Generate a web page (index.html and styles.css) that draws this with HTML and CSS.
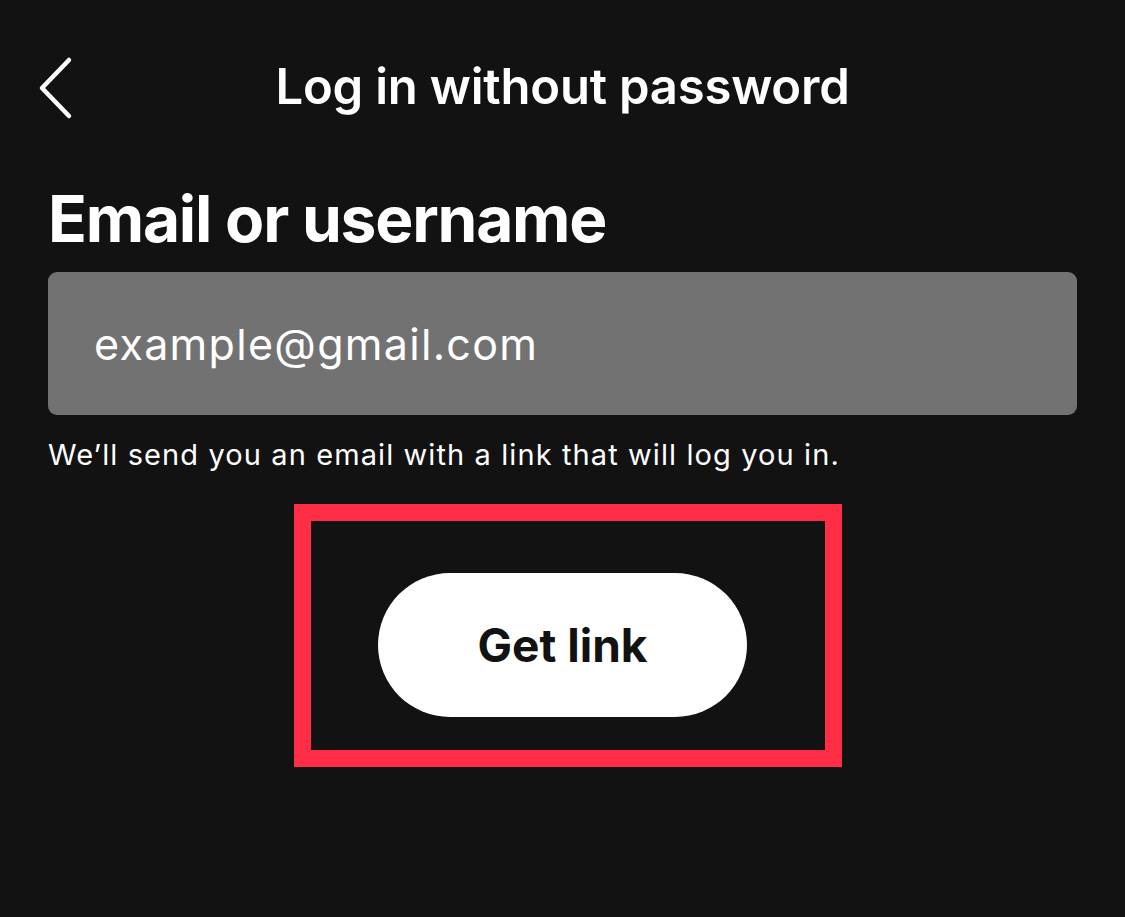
FILE: index.html
```html
<!DOCTYPE html>
<html lang="en">
<head>
<meta charset="UTF-8">
<meta name="viewport" content="width=device-width, initial-scale=1.0">
<title>Log in without password</title>
<link rel="stylesheet" href="styles.css">
</head>
<body>
<div class="screen">
    <div class="top-bar">
        <a class="back" href="#" aria-label="Back">
            <svg width="40" height="64" viewBox="0 0 40 64">
                <polyline points="31,4 4,32 31,60" fill="none" stroke="#ffffff" stroke-width="4.5" stroke-linecap="round" stroke-linejoin="round"/>
            </svg>
        </a>
        <h1>Log in without password</h1>
    </div>
    <h2 class="label">Email or username</h2>
    <div class="field">example@gmail.com</div>
    <p class="hint">We’ll send you an email with a link that will log you in.</p>
    <div class="highlight">
        <button class="get-link">Get link</button>
    </div>
</div>
</body>
</html>
```

FILE: styles.css
```css
body {
    margin: 0;
    background-color: #121212;
    font-family: Inter, "Noto Sans", sans-serif;
    color: #ffffff;
}
.screen {
    padding: 0 48px;
}
.top-bar {
    position: relative;
    height: 174px;
    display: flex;
    justify-content: center;
    align-items: flex-start;
}
.back {
    position: absolute;
    left: -10px;
    top: 56px;
}
.top-bar h1 {
    margin: 57px 0 0;
    font-size: 49px;
    font-weight: 600;
    letter-spacing: -0.2px;
    line-height: 60px;
}
.label {
    margin: 0 0 8px;
    font-size: 64px;
    font-weight: 700;
    letter-spacing: -1.2px;
    line-height: 90px;
}
.field {
    height: 143px;
    box-sizing: border-box;
    background-color: #727272;
    border-radius: 9px;
    padding: 0 46px;
    display: flex;
    align-items: center;
    font-size: 43px;
    letter-spacing: 1.3px;
}
.hint {
    margin: 22px 0 0;
    font-size: 29px;
    letter-spacing: 1.1px;
}
.highlight {
    width: 548px;
    height: 263px;
    box-sizing: border-box;
    margin: 32px 0 0 246px;
    border: 17px solid #ff2d46;
    display: flex;
    justify-content: center;
    align-items: center;
}
.get-link {
    width: 369px;
    height: 144px;
    margin: 19px 0 0 -11px;
    border: none;
    border-radius: 72px;
    background-color: #ffffff;
    color: #121212;
    font-family: Inter, "Noto Sans", sans-serif;
    font-size: 46px;
    font-weight: 700;
    cursor: pointer;
}
```
